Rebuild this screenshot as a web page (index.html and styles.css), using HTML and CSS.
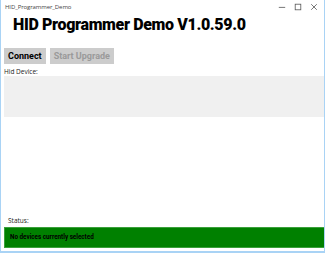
FILE: index.html
```html
<!DOCTYPE html>
<html lang="en">
<head>
  <meta charset="UTF-8">
  <title>HID_Programmer_Demo</title>
  <link rel="stylesheet" href="styles.css">
</head>
<body>
  <div class="window">
    <div class="titlebar">
      <span class="app-name">HID_Programmer_Demo</span>
      <div class="win-controls">
        <svg width="10" height="10" viewBox="0 0 10 10"><path d="M1 5.5h8" stroke="#555" stroke-width="1"/></svg>
        <svg width="10" height="10" viewBox="0 0 10 10"><rect x="1.5" y="1.5" width="7" height="7" fill="none" stroke="#555" stroke-width="1"/></svg>
        <svg width="10" height="10" viewBox="0 0 10 10"><path d="M1.5 1.5l7 7M8.5 1.5l-7 7" stroke="#555" stroke-width="1"/></svg>
      </div>
    </div>

    <h1 class="heading">HID Programmer Demo V1.0.59.0</h1>

    <div class="actions">
      <button class="btn">Connect</button>
      <button class="btn" disabled>Start Upgrade</button>
    </div>

    <div class="label">Hid Device:</div>
    <div class="device-list"></div>

    <div class="spacer"></div>

    <div class="label status-label">Status:</div>
    <div class="status">No devices currently selected</div>
  </div>
</body>
</html>
```

FILE: styles.css
```css
* {
  box-sizing: border-box;
}

body {
  margin: 0;
  font-family: 'Open Sans', 'Noto Sans', sans-serif;
  background: #fff;
}

.window {
  width: 325px;
  height: 253px;
  display: flex;
  flex-direction: column;
  border: 1px solid #a9d3f5;
  border-top: none;
  border-bottom-width: 2px;
  background: #fff;
}

.titlebar {
  height: 14px;
  display: flex;
  align-items: center;
  justify-content: space-between;
  padding: 0 6px 0 4px;
}

.app-name {
  font-size: 6px;
  color: #444;
  letter-spacing: -0.1px;
}

.win-controls {
  display: flex;
  gap: 8px;
}

.win-controls svg {
  width: 8px;
  height: 8px;
}

.heading {
  margin: 0 0 0 12px;
  font-family: Roboto, sans-serif;
  font-size: 16px;
  font-weight: 900;
  color: #000;
  line-height: 20px;
  padding-top: 1px;
  letter-spacing: -0.35px;
}

.actions {
  display: flex;
  gap: 4px;
  margin: 13px 0 0 3px;
}

.btn {
  height: 16px;
  padding: 0 4px;
  border: none;
  background: #cccccc;
  font-family: Roboto, sans-serif;
  font-size: 9px;
  font-weight: 700;
  color: #000;
  line-height: 16px;
}

.btn:disabled {
  color: #9a9a9a;
}

.label {
  font-size: 6.5px;
  color: #222;
  margin: 3px 0 0 3px;
  line-height: 9px;
}

.device-list {
  height: 41px;
  margin-left: 3px;
  background: #f0f0f0;
}

.spacer {
  flex: 1;
}

.status-label {
  margin: 0 0 2px 7px;
}

.status {
  height: 21px;
  margin: 0 0 3px 3px;
  padding-left: 5px;
  background: #008000;
  border: 1px solid #3aa03a;
  border-right: none;
  font-family: Roboto, sans-serif;
  font-size: 6.3px;
  font-weight: 700;
  color: #000;
  line-height: 19px;
}
```
